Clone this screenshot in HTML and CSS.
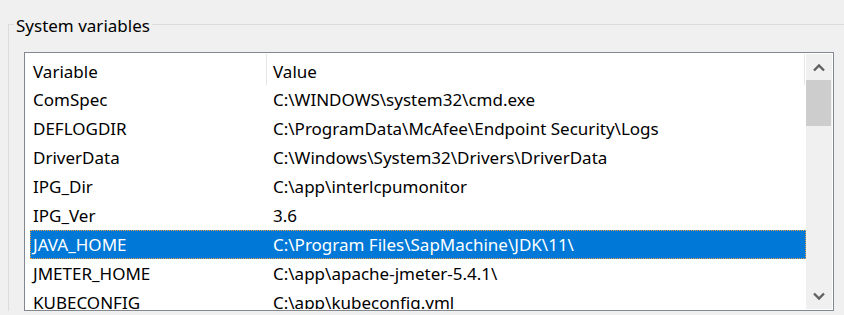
FILE: index.html
```html
<!DOCTYPE html>
<html lang="en">

<head>
    <meta charset="UTF-8">
    <title>System variables</title>
    <link rel="stylesheet" href="styles.css">
</head>

<body>
    <!-- group box with the list of system variables -->
    <fieldset class="group">
        <legend>System variables</legend>

        <div class="listbox">
            <div class="list">
                <!-- column header -->
                <div class="list-header">
                    <div class="head-cell name-col">Variable</div>
                    <div class="head-cell value-col">Value</div>
                </div>

                <div class="row"><div class="cell name">ComSpec</div><div class="cell">C:\WINDOWS\system32\cmd.exe</div></div>
                <div class="row"><div class="cell name">DEFLOGDIR</div><div class="cell">C:\ProgramData\McAfee\Endpoint Security\Logs</div></div>
                <div class="row"><div class="cell name">DriverData</div><div class="cell">C:\Windows\System32\Drivers\DriverData</div></div>
                <div class="row"><div class="cell name">IPG_Dir</div><div class="cell">C:\app\interlcpumonitor</div></div>
                <div class="row"><div class="cell name">IPG_Ver</div><div class="cell">3.6</div></div>
                <div class="row selected"><div class="cell name">JAVA_HOME</div><div class="cell">C:\Program Files\SapMachine\JDK\11\</div></div>
                <div class="row"><div class="cell name">JMETER_HOME</div><div class="cell">C:\app\apache-jmeter-5.4.1\</div></div>
                <div class="row"><div class="cell name">KUBECONFIG</div><div class="cell">C:\app\kubeconfig.yml</div></div>
            </div>

            <!-- vertical scroll bar -->
            <div class="scrollbar">
                <div class="scroll-btn">
                    <svg width="12" height="9" viewBox="0 0 12 9"><polyline points="1,7.5 6,2.5 11,7.5" fill="none" stroke="#606060" stroke-width="2.4"/></svg>
                </div>
                <div class="thumb"></div>
                <div class="track"></div>
                <div class="scroll-btn">
                    <svg width="12" height="9" viewBox="0 0 12 9"><polyline points="1,1.5 6,6.5 11,1.5" fill="none" stroke="#606060" stroke-width="2.4"/></svg>
                </div>
            </div>
        </div>
    </fieldset>
</body>

</html>
```

FILE: styles.css
```css
/* page */
body {
    margin: 0;
    background-color: #f0f0f0;
    font-family: "Noto Sans", "Open Sans", sans-serif;
    font-size: 17px;
    color: #000;
    overflow: hidden;
}

/* group box */
.group {
    margin: 12px -20px 0 8px;
    padding: 0 0 0 5px;
    border: 1px solid #dcdcdc;
    border-right: none;
    border-bottom: none;
}

.group legend {
    padding: 3px 2px 0;
    line-height: 21px;
    font-size: 17px;
}

/* list box */
.listbox {
    display: flex;
    margin: 16px 0 0 10px;
    padding: 1px;
    box-sizing: border-box;
    width: 810px;
    height: 259px;
    border: 1px solid #828790;
    background-color: #fff;
}

.list {
    flex: 1;
    overflow: hidden;
}

.list-header {
    display: flex;
    height: 31px;
    margin-right: 1px;
}

.head-cell {
    box-sizing: border-box;
    padding: 6px 0 0 7px;
    border-right: 1px solid #e5e5e5;
    white-space: nowrap;
}

.head-cell.name-col {
    width: 241px;
}

.head-cell.value-col {
    flex: 1;
    padding-left: 6px;
}

.row {
    display: flex;
    height: 29px;
    margin-left: 4px;
    box-sizing: border-box;
    padding-top: 2px;
    border: 1px solid transparent;
    white-space: nowrap;
}

.cell {
    padding-left: 6px;
}

.cell.name {
    width: 236px;
    box-sizing: border-box;
    padding-left: 2px;
}

/* selected item */
.row.selected {
    background-color: #0078d7;
    color: #fff;
    border: 1px dotted #e8a04a;
}

/* scroll bar */
.scrollbar {
    display: flex;
    flex-direction: column;
    width: 26px;
    background-color: #f0f0f0;
}

.scroll-btn {
    height: 26px;
    display: flex;
    align-items: center;
    justify-content: center;
}

.thumb {
    height: 46px;
    margin-right: 1px;
    background-color: #cdcdcd;
}

.track {
    flex: 1;
}
```
